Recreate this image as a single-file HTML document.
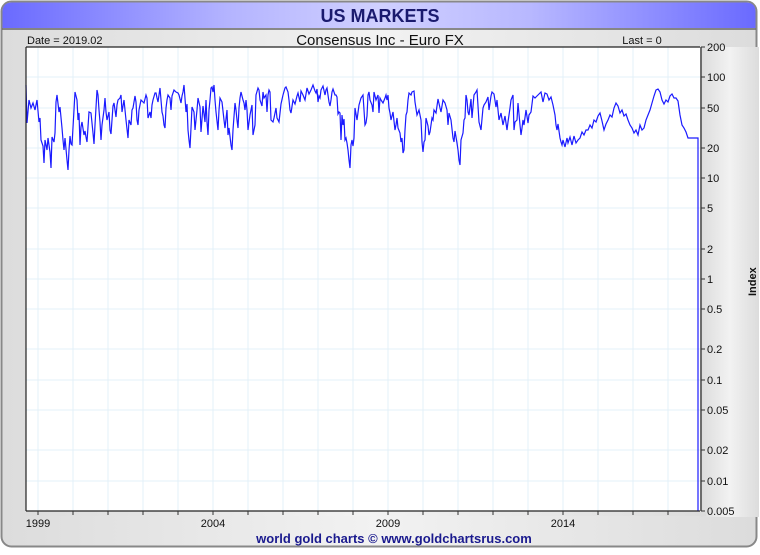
<!DOCTYPE html>
<html><head><meta charset="utf-8"><style>
html,body{margin:0;padding:0;background:#fff;}
body{width:760px;height:550px;overflow:hidden;font-family:"Liberation Sans",sans-serif;}
</style></head><body>
<svg width="760" height="550" viewBox="0 0 760 550" xmlns="http://www.w3.org/2000/svg" font-family="Liberation Sans, sans-serif">
<defs>
<linearGradient id="hd" x1="0" x2="1" y1="0" y2="0">
<stop offset="0" stop-color="#6a6aff"/><stop offset="0.3" stop-color="#b4b4ff"/><stop offset="0.5" stop-color="#d0d0ff"/><stop offset="0.7" stop-color="#b8b8ff"/><stop offset="1" stop-color="#6a6aff"/>
</linearGradient>
<linearGradient id="bg" x1="0" x2="1" y1="0" y2="0">
<stop offset="0" stop-color="#dcdcdc"/><stop offset="0.5" stop-color="#f2f2f2"/><stop offset="1" stop-color="#dcdcdc"/>
</linearGradient>
</defs>
<rect x="0" y="0" width="760" height="550" fill="#fff"/>
<rect x="1.5" y="1.5" width="755" height="545" rx="10" fill="url(#bg)" stroke="#888" stroke-width="2"/>
<path d="M2.5,28 L2.5,12 Q2.5,2.5 12,2.5 L746,2.5 Q755.5,2.5 755.5,12 L755.5,28 Z" fill="url(#hd)"/>
<line x1="2" y1="29" x2="756" y2="29" stroke="#666" stroke-width="1.5"/>
<text x="380" y="22" text-anchor="middle" font-size="18" font-weight="bold" fill="#1a1a6e">US MARKETS</text>
<text x="27" y="44" font-size="11" fill="#111">Date = 2019.02</text>
<text x="380" y="45" text-anchor="middle" font-size="15" fill="#111">Consensus Inc - Euro FX</text>
<text x="642" y="44" text-anchor="middle" font-size="11" fill="#111">Last = 0</text>
<rect x="26" y="47" width="674" height="464" fill="#fff"/>
<g stroke="#e3f0f8" stroke-width="1">
<line x1="38" y1="47" x2="38" y2="511"/><line x1="73" y1="47" x2="73" y2="511"/><line x1="108" y1="47" x2="108" y2="511"/><line x1="143" y1="47" x2="143" y2="511"/><line x1="178" y1="47" x2="178" y2="511"/><line x1="213" y1="47" x2="213" y2="511"/><line x1="248" y1="47" x2="248" y2="511"/><line x1="283" y1="47" x2="283" y2="511"/><line x1="318" y1="47" x2="318" y2="511"/><line x1="353" y1="47" x2="353" y2="511"/><line x1="388" y1="47" x2="388" y2="511"/><line x1="423" y1="47" x2="423" y2="511"/><line x1="458" y1="47" x2="458" y2="511"/><line x1="493" y1="47" x2="493" y2="511"/><line x1="528" y1="47" x2="528" y2="511"/><line x1="563" y1="47" x2="563" y2="511"/><line x1="598" y1="47" x2="598" y2="511"/><line x1="633" y1="47" x2="633" y2="511"/><line x1="668" y1="47" x2="668" y2="511"/>
<line x1="26" y1="77" x2="700" y2="77"/><line x1="26" y1="108" x2="700" y2="108"/><line x1="26" y1="148" x2="700" y2="148"/><line x1="26" y1="178" x2="700" y2="178"/><line x1="26" y1="208" x2="700" y2="208"/><line x1="26" y1="249" x2="700" y2="249"/><line x1="26" y1="279" x2="700" y2="279"/><line x1="26" y1="309" x2="700" y2="309"/><line x1="26" y1="349" x2="700" y2="349"/><line x1="26" y1="380" x2="700" y2="380"/><line x1="26" y1="410" x2="700" y2="410"/><line x1="26" y1="450" x2="700" y2="450"/><line x1="26" y1="481" x2="700" y2="481"/>
</g>
<polyline fill="none" stroke="#1a1aff" stroke-width="1.2" points="26,85 27,123 29,100 31,108 33,103 35,110 37,100 39,122 40,118 41,140 43,146 44,163 45,140 47,150 48,138 50,152 51,168 52,137 54,142 55,133 56,102 57,95 59,112 60,107 62,128 63,140 64,150 65,138 67,160 68,170 69,150 70,136 71,144 72,145 74,110 75,92 77,100 78,120 79,113 80,145 81,127 82,122 84,135 85,131 86,137 87,142 89,112 91,113 93,133 94,144 95,125 97,90 98,95 99,110 100,122 101,140 102,125 104,110 105,98 106,112 107,120 109,112 110,130 111,134 113,106 114,103 116,117 117,105 118,100 120,98 121,95 122,112 124,100 126,120 128,138 129,120 131,125 132,110 133,108 135,96 136,102 137,120 138,125 139,110 141,100 143,102 144,103 146,95 147,98 148,118 150,112 151,118 152,105 153,100 155,93 156,93 157,98 158,102 160,88 161,100 162,112 163,116 164,125 165,128 166,108 167,100 168,95 170,98 171,110 172,96 174,90 176,92 178,93 179,95 181,103 182,96 183,92 184,85 186,112 187,104 188,130 189,140 190,148 191,128 192,107 194,112 195,130 197,110 198,98 200,107 201,132 203,106 205,122 206,100 207,122 208,135 209,110 210,100 211,88 212,87 213,92 214,85 215,100 216,112 218,130 219,110 220,98 222,102 224,120 225,128 227,110 228,135 229,128 231,145 232,150 233,130 235,103 236,110 237,120 238,128 239,108 240,98 241,92 243,100 244,103 245,110 246,100 247,110 248,130 250,115 252,105 253,135 255,125 256,95 258,88 259,90 260,100 262,106 263,92 264,98 266,95 267,112 268,95 269,90 270,92 271,120 273,122 274,118 276,108 277,118 279,122 281,104 283,95 285,88 286,87 288,92 289,100 290,110 291,113 293,100 295,104 297,96 298,93 300,102 301,91 303,95 305,100 307,88 309,94 311,90 313,85 315,91 316,93 317,89 318,102 319,96 320,98 321,90 323,86 325,95 326,90 327,88 328,95 329,102 330,106 331,100 332,92 333,89 334,92 335,95 336,95 337,97 338,114 339,112 340,113 341,140 342,115 343,125 344,119 345,140 346,138 347,143 348,150 349,160 350,168 351,145 352,140 353,146 354,138 355,108 357,120 359,105 361,98 363,95 364,110 365,125 366,123 367,116 368,95 369,92 370,100 372,105 373,112 374,92 376,100 378,95 379,113 380,98 381,100 383,103 385,98 386,95 387,100 388,95 389,108 390,113 391,120 393,112 395,130 396,125 397,118 398,128 400,133 401,142 402,138 403,153 404,150 405,130 406,115 407,112 408,100 409,93 411,95 412,92 414,91 415,102 417,115 419,110 421,120 422,142 423,152 424,142 425,140 426,118 428,126 429,135 430,132 432,118 433,120 434,110 436,113 438,99 440,108 441,112 443,100 445,103 447,110 448,125 449,113 451,120 453,138 454,142 455,131 457,143 458,150 459,160 460,165 461,140 463,133 464,120 465,118 466,95 467,100 468,112 469,115 471,99 472,118 474,95 476,92 477,90 479,122 481,130 483,108 484,105 486,102 488,97 489,110 491,96 492,92 494,94 496,107 497,100 499,120 501,113 503,125 505,116 507,130 508,122 510,108 511,100 513,95 514,130 515,122 517,120 518,103 520,125 521,135 522,128 523,120 524,125 526,110 528,123 529,115 531,112 533,96 535,98 537,96 539,94 541,92 543,102 545,93 547,94 549,100 551,97 553,105 555,115 556,125 557,130 558,124 560,138 561,142 562,145 563,140 565,147 567,138 568,143 570,137 572,145 574,136 576,143 578,140 580,138 582,132 584,135 586,130 588,130 590,125 592,128 594,120 596,122 598,116 600,113 602,121 604,130 606,124 608,120 610,115 612,117 614,108 616,103 618,106 620,113 622,110 624,116 626,114 628,120 630,125 632,128 634,133 636,130 638,135 640,125 642,130 644,128 646,120 648,115 650,110 652,103 654,96 656,90 658,89 660,92 662,100 664,104 666,100 668,102 670,96 672,94 674,98 676,98 678,101 680,115 682,125 684,128 686,132 688,138 698,138 698,511"/>
<rect x="701" y="47" width="58" height="470" fill="url(#bg)"/>
<rect x="26" y="512" width="680" height="4" fill="url(#bg)"/>
<g stroke="#222" stroke-width="1.2">
<line x1="26" y1="47" x2="26" y2="511"/><line x1="26" y1="47" x2="700" y2="47"/>
<line x1="26" y1="511" x2="700" y2="511"/><line x1="701" y1="47" x2="701" y2="511"/>
</g>
<g stroke="#333" stroke-width="1">
<line x1="701" y1="47" x2="705" y2="47"/><line x1="701" y1="77" x2="705" y2="77"/><line x1="701" y1="108" x2="705" y2="108"/><line x1="701" y1="148" x2="705" y2="148"/><line x1="701" y1="178" x2="705" y2="178"/><line x1="701" y1="208" x2="705" y2="208"/><line x1="701" y1="249" x2="705" y2="249"/><line x1="701" y1="279" x2="705" y2="279"/><line x1="701" y1="309" x2="705" y2="309"/><line x1="701" y1="349" x2="705" y2="349"/><line x1="701" y1="380" x2="705" y2="380"/><line x1="701" y1="410" x2="705" y2="410"/><line x1="701" y1="450" x2="705" y2="450"/><line x1="701" y1="481" x2="705" y2="481"/><line x1="701" y1="511" x2="705" y2="511"/>
<line x1="38" y1="511" x2="38" y2="515"/><line x1="73" y1="511" x2="73" y2="515"/><line x1="108" y1="511" x2="108" y2="515"/><line x1="143" y1="511" x2="143" y2="515"/><line x1="178" y1="511" x2="178" y2="515"/><line x1="213" y1="511" x2="213" y2="515"/><line x1="248" y1="511" x2="248" y2="515"/><line x1="283" y1="511" x2="283" y2="515"/><line x1="318" y1="511" x2="318" y2="515"/><line x1="353" y1="511" x2="353" y2="515"/><line x1="388" y1="511" x2="388" y2="515"/><line x1="423" y1="511" x2="423" y2="515"/><line x1="458" y1="511" x2="458" y2="515"/><line x1="493" y1="511" x2="493" y2="515"/><line x1="528" y1="511" x2="528" y2="515"/><line x1="563" y1="511" x2="563" y2="515"/><line x1="598" y1="511" x2="598" y2="515"/><line x1="633" y1="511" x2="633" y2="515"/><line x1="668" y1="511" x2="668" y2="515"/>
</g>
<g font-size="11" fill="#111">
<text x="707" y="51">200</text><text x="707" y="81">100</text><text x="707" y="112">50</text><text x="707" y="152">20</text><text x="707" y="182">10</text><text x="707" y="212">5</text><text x="707" y="253">2</text><text x="707" y="283">1</text><text x="707" y="313">0.5</text><text x="707" y="353">0.2</text><text x="707" y="384">0.1</text><text x="707" y="414">0.05</text><text x="707" y="454">0.02</text><text x="707" y="485">0.01</text><text x="707" y="515">0.005</text>
<text x="38" y="527" text-anchor="middle">1999</text><text x="213" y="527" text-anchor="middle">2004</text><text x="388" y="527" text-anchor="middle">2009</text><text x="563" y="527" text-anchor="middle">2014</text>
</g>
<text x="0" y="0" font-size="11" font-weight="bold" fill="#111" transform="translate(756,296) rotate(-90)">Index</text>
<text x="394" y="543" text-anchor="middle" font-size="13" font-weight="bold" fill="#1a1a8e">world gold charts © www.goldchartsrus.com</text>
</svg>
</body></html>
